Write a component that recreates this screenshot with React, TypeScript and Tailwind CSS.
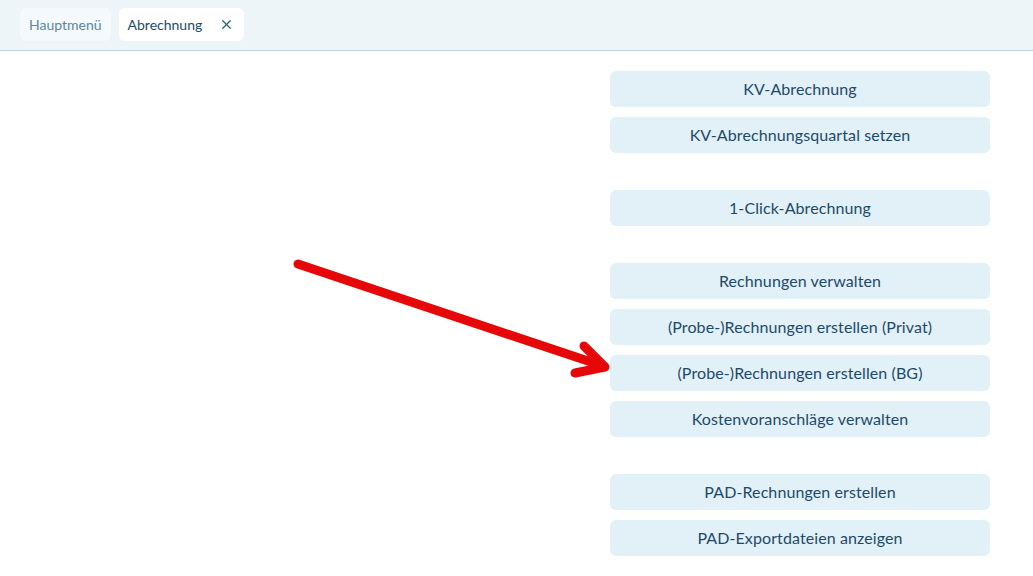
import { X } from "lucide-react";

const groups: string[][] = [
  ["KV-Abrechnung", "KV-Abrechnungsquartal setzen"],
  ["1-Click-Abrechnung"],
  [
    "Rechnungen verwalten",
    "(Probe-)Rechnungen erstellen (Privat)",
    "(Probe-)Rechnungen erstellen (BG)",
    "Kostenvoranschläge verwalten",
  ],
  ["PAD-Rechnungen erstellen", "PAD-Exportdateien anzeigen"],
];

const MenuButton = ({ label }: { label: string }) => (
  <button className="h-[36px] w-full rounded-[6px] bg-[#e2f0f7] text-[16px] tracking-[0.1px] text-[#1d4a6b]">
    {label}
  </button>
);

export default function App() {
  return (
    <div
      className="relative min-h-[576px] w-full bg-white"
      style={{ fontFamily: "Lato, 'Noto Sans', sans-serif" }}
    >
      {/* tab bar */}
      <div className="flex h-[51px] items-start gap-[8px] border-b border-[#b9d1e1] bg-[#eef5f9] pl-[20px] pt-[8px]">
        <div className="flex h-[33px] items-center rounded-[6px] bg-[#f4f9fb] px-[9px] text-[14px] text-[#5a86a6]">
          Hauptmenü
        </div>
        <div className="flex h-[33px] items-center gap-[17px] rounded-[6px] bg-white pl-[9px] pr-[10px] text-[14px] text-[#1d4a6b]">
          Abrechnung
          <X size={15} strokeWidth={2} className="text-[#2b5f82]" />
        </div>
      </div>

      {/* menu entries */}
      <div className="ml-[610px] flex w-[380px] flex-col gap-[37px] pt-[20px]">
        {groups.map((g, i) => (
          <div key={i} className="flex flex-col gap-[10px]">
            {g.map((label) => (
              <MenuButton key={label} label={label} />
            ))}
          </div>
        ))}
      </div>

      {/* red pointer arrow */}
      <svg
        className="pointer-events-none absolute left-0 top-0"
        width="1033"
        height="576"
        viewBox="0 0 1033 576"
      >
        <g
          stroke="#e60808"
          strokeWidth="9"
          strokeLinecap="round"
          strokeLinejoin="round"
          fill="none"
        >
          <path d="M298 264 L603 366" />
          <path d="M584 346 L605 367 L575 373" />
        </g>
      </svg>
    </div>
  );
}
